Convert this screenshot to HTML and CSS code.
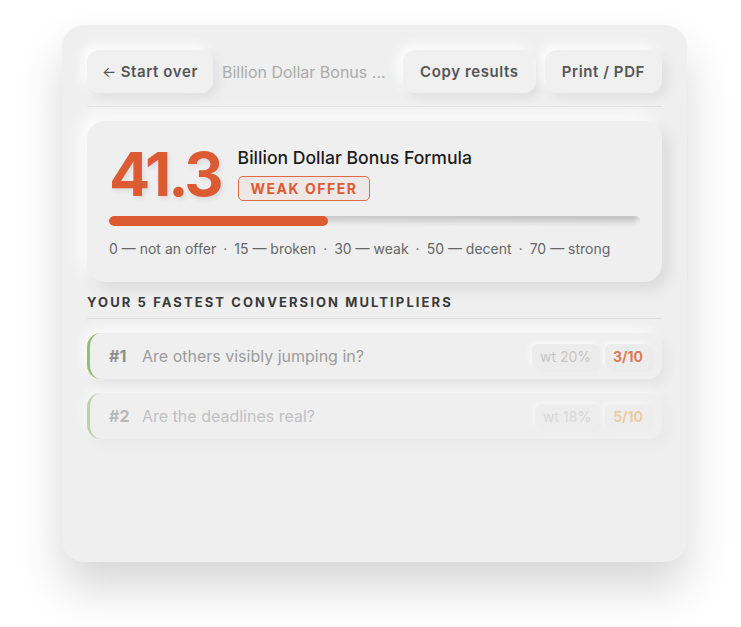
FILE: index.html
```html
<!DOCTYPE html>
<html lang="en">
<head>
  <meta charset="UTF-8" />
  <meta name="viewport" content="width=device-width, initial-scale=1.0"/>
  <title>Offer Score</title>
  <link rel="stylesheet" href="styles.css">
</head>
<body>
  <div class="panel">
    <!-- Toolbar -->
    <div class="toolbar">
      <button class="btn btn-back"><span class="arrow">&larr;</span> Start over</button>
      <div class="crumb">Billion Dollar Bonus ...</div>
      <button class="btn">Copy results</button>
      <button class="btn">Print / PDF</button>
    </div>

    <!-- Score card -->
    <div class="score-card">
      <div class="score-top">
        <div class="score-num">41.3</div>
        <div class="score-meta">
          <div class="offer-name">Billion Dollar Bonus Formula</div>
          <span class="badge">WEAK OFFER</span>
        </div>
      </div>
      <div class="bar"><div class="bar-fill" style="width: 41.3%"></div></div>
      <div class="scale"><span>0 — not an offer</span><span class="sep">·</span><span>15 — broken</span><span class="sep">·</span><span>30 — weak</span><span class="sep">·</span><span>50 — decent</span><span class="sep">·</span><span>70 — strong</span></div>
    </div>

    <h2 class="section-title">YOUR 5 FASTEST CONVERSION MULTIPLIERS</h2>

    <div class="rows">
      <div class="row fade-1">
        <span class="rank">#1</span>
        <span class="question">Are others visibly jumping in?</span>
        <span class="chip weight">wt 20%</span>
        <span class="chip grade low">3/10</span>
      </div>
      <div class="row fade-2">
        <span class="rank">#2</span>
        <span class="question">Are the deadlines real?</span>
        <span class="chip weight">wt 18%</span>
        <span class="chip grade mid">5/10</span>
      </div>
    </div>
  </div>
</body>
</html>
```

FILE: styles.css
```css
body {
  margin: 0;
  padding: 25px 0 65px 62px;
  background: #ffffff;
  font-family: Inter, "Noto Sans", Arial, sans-serif;
  color: #222;
}

.panel {
  box-sizing: border-box;
  width: 625px;
  height: 537px;
  padding: 25px;
  background: #efefef;
  border-radius: 22px;
  box-shadow: 0 26px 46px rgba(0, 0, 0, 0.16), -10px -10px 24px rgba(255, 255, 255, 0.9);
}

/* Toolbar */
.toolbar {
  display: flex;
  align-items: center;
  gap: 9px;
  padding-bottom: 13px;
  border-bottom: 1px solid #e0e0e0;
}

.btn {
  height: 43px;
  padding: 0 17px;
  border: none;
  border-radius: 12px;
  background: #f0f0f0;
  font-family: inherit;
  font-size: 15px;
  font-weight: 600;
  letter-spacing: 0.6px;
  color: #555;
  box-shadow: 5px 5px 12px rgba(0, 0, 0, 0.07), -5px -5px 12px rgba(255, 255, 255, 0.95);
  cursor: pointer;
}

.btn-back {
  padding: 0 15px;
}

.arrow {
  font-weight: 400;
  letter-spacing: 0;
}

.crumb {
  flex: 1;
  font-size: 16px;
  color: #ababab;
  white-space: nowrap;
  overflow: hidden;
}

/* Score card */
.score-card {
  margin-top: 14px;
  padding: 20px 22px 25px;
  background: #efefef;
  border-radius: 18px;
  box-shadow: 7px 7px 16px rgba(0, 0, 0, 0.09), -7px -7px 16px rgba(255, 255, 255, 0.95);
}

.score-top {
  display: flex;
  align-items: flex-start;
  gap: 17px;
}

.score-num {
  font-size: 61px;
  font-weight: 700;
  letter-spacing: -3px;
  line-height: 66px;
  color: #dc5b32;
  text-shadow: 2px 3px 5px rgba(0, 0, 0, 0.08);
}

.score-meta {
  padding-top: 6px;
  display: flex;
  flex-direction: column;
  align-items: flex-start;
  gap: 8px;
}

.offer-name {
  font-size: 17.6px;
  font-weight: 500;
  color: #1c1c1c;
}

.badge {
  padding: 3px 12px;
  border: 1px solid #e06a45;
  border-radius: 5px;
  background: rgba(220, 91, 50, 0.05);
  color: #dc5b32;
  font-size: 14px;
  font-weight: 700;
  letter-spacing: 1.5px;
}

.bar {
  margin-top: 9px;
  height: 10px;
  border-radius: 5px;
  background: linear-gradient(90deg, #e2e2e2, #d4d4d4);
  box-shadow: inset 2px 2px 4px rgba(0, 0, 0, 0.12), inset -2px -2px 4px rgba(255, 255, 255, 0.7);
  overflow: hidden;
}

.bar-fill {
  height: 100%;
  border-radius: 5px;
  background: #dc5b32;
}

.scale {
  margin-top: 14px;
  font-size: 14px;
  color: #666;
}

.sep {
  margin: 0 7px;
}

/* Multipliers */
.section-title {
  margin: 12px 0 0;
  padding-bottom: 8px;
  border-bottom: 1px solid #dedede;
  font-size: 13px;
  font-weight: 700;
  letter-spacing: 2.1px;
  color: #3a3a3a;
}

.rows {
  display: flex;
  flex-direction: column;
  gap: 14px;
  margin-top: 14px;
}

.row {
  display: flex;
  align-items: center;
  gap: 12px;
  height: 46px;
  padding: 0 11px 0 19px;
  border-left: 3px solid #7cb35a;
  border-radius: 14px;
  background: #f0f0f0;
  box-shadow: 5px 5px 12px rgba(0, 0, 0, 0.06), -5px -5px 12px rgba(255, 255, 255, 0.9);
}

.fade-1 { opacity: 0.8; }
.fade-2 { opacity: 0.45; }

.rank {
  width: 21px;
  font-size: 16px;
  font-weight: 700;
  color: #777;
}

.question {
  flex: 1;
  font-size: 16px;
  color: #888;
}

.chip {
  padding: 4px 8px;
  border-radius: 6px;
  background: #ececec;
  font-size: 14px;
  box-shadow: 2px 2px 5px rgba(0, 0, 0, 0.04), -2px -2px 5px rgba(255, 255, 255, 0.9);
}

.chip.weight {
  color: #bbb;
  margin-right: -6px;
}

.chip.grade {
  font-weight: 700;
}

.grade.low { color: #dc5b32; }
.grade.mid { color: #e8a33a; }
```
